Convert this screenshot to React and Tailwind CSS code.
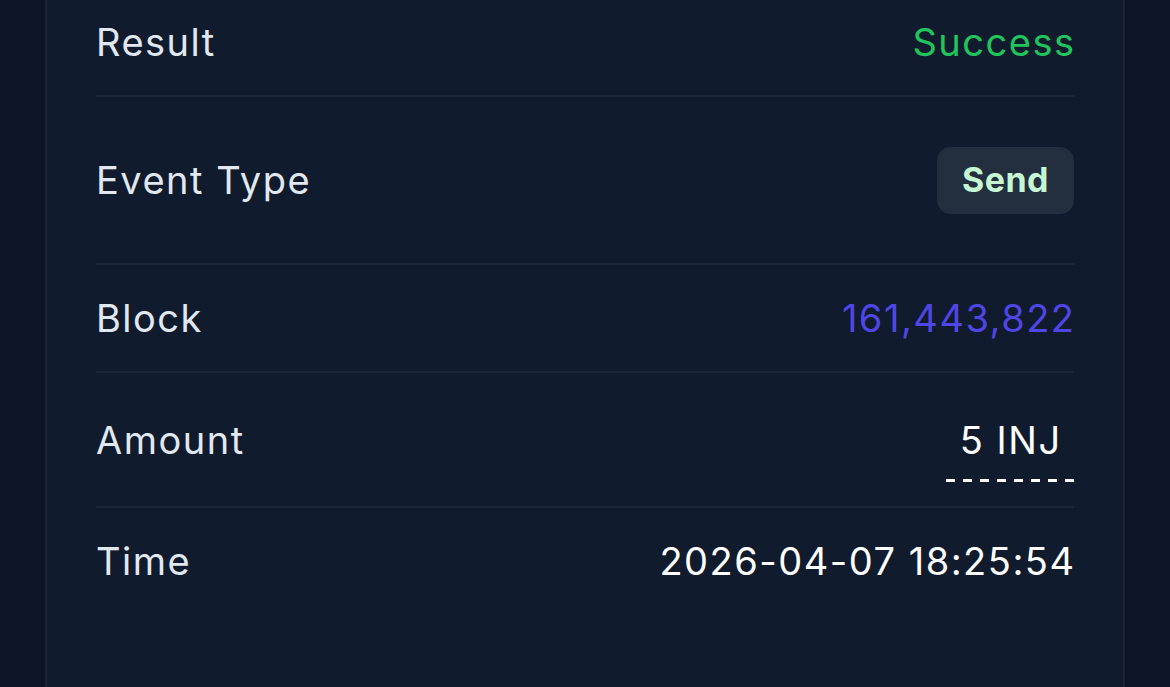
function Row({ label, children, className }) {
  return (
    <div className={`flex justify-between border-b-2 border-[#1c2637] ${className}`}>
      <span className="text-[#e2e8f0]">{label}</span>
      {children}
    </div>
  );
}

export default function App() {
  return (
    <div className="min-h-[687px] w-full bg-[#0c1527] px-[45px] font-['Inter',sans-serif] text-[38px] leading-[48px] tracking-[1.5px]">
      <div className="min-h-[687px] border-x-2 border-[#1b2535] bg-[#101b2d] px-[49px]">
        {/* Result */}
        <Row label="Result" className="h-[97px] items-center pb-[12px]">
          <span className="-mr-[1.5px] text-[#20c55c]">Success</span>
        </Row>

        {/* Event Type */}
        <Row label="Event Type" className="h-[168px] items-center">
          <span className="flex h-[67px] items-center rounded-[14px] bg-[#232f3e] px-[25px] text-[34px] font-bold tracking-[0.5px] text-[#c4f7d2]">
            Send
          </span>
        </Row>

        {/* Block */}
        <Row label="Block" className="h-[108px] items-center">
          <span className="-mr-[1.5px] text-[#4f46e5]">161,443,822</span>
        </Row>

        {/* Amount */}
        <Row label="Amount" className="h-[135px] items-start pt-[43px]">
          <div className="flex w-[128px] flex-col items-center">
            <span className="pl-[1.5px] text-white">5 INJ</span>
            <div className="mt-[15px] h-[3px] w-full bg-[linear-gradient(to_right,white_9px,transparent_9px)] bg-[length:17px_3px]" />
          </div>
        </Row>

        {/* Time */}
        <div className="flex h-[106px] items-center justify-between">
          <span className="text-[#e2e8f0]">Time</span>
          <span className="-mr-[1.5px] text-white">2026-04-07 18:25:54</span>
        </div>
      </div>
    </div>
  );
}
